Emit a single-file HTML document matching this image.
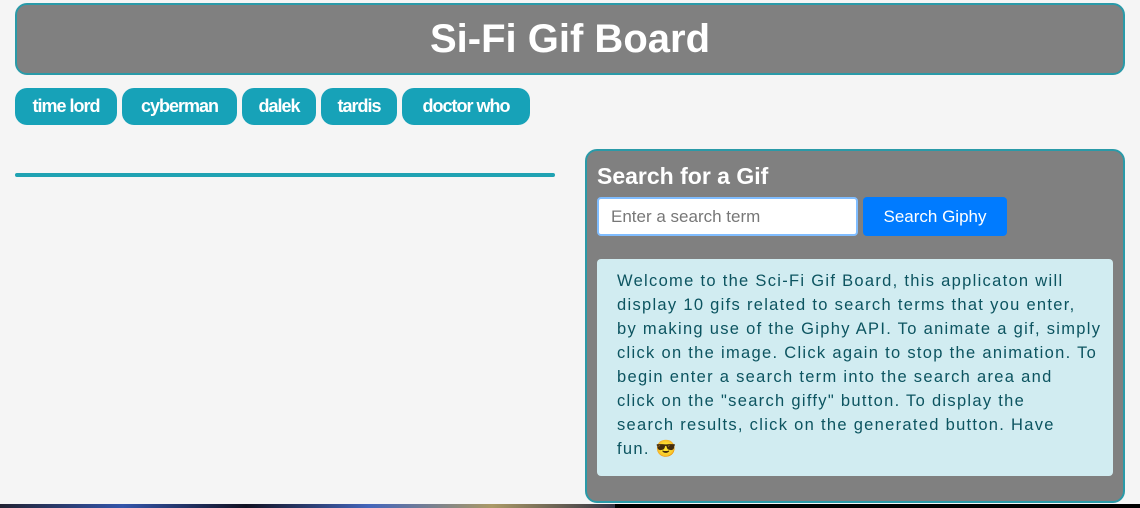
<!DOCTYPE html><html><head><style>
body{margin:0;background:#f5f5f5;width:1140px;height:508px;overflow:hidden;position:relative;font-family:"Liberation Sans",sans-serif}
.hd{position:absolute;left:15px;top:3px;width:1106px;height:68px;background:#808080;border:2px solid #2a9aa8;border-radius:12px;color:#fff;font-weight:bold;font-size:40px;text-align:center;line-height:68px}
.b{position:absolute;top:88px;height:37px;background:#17a2b8;border-radius:12px;color:#fff;font-size:18px;font-weight:bold;line-height:37px;text-align:center;letter-spacing:-1px}
.ln{position:absolute;left:15px;top:173px;width:540px;height:4px;background:#1fa2b2;border-radius:2px}
.p{position:absolute;left:585px;top:149px;width:536px;height:350px;background:#808080;border:2px solid #2a9aa8;border-radius:12px}
.p h3{position:absolute;left:10px;top:12px;margin:0;color:#fff;font-size:23px}
.in{position:absolute;left:10px;top:46px;width:261px;height:39px;background:#fff;border:2px solid #80bdff;border-radius:4px;box-sizing:border-box;color:#777;font-size:17px;line-height:35px;padding-left:12px}
.sb{position:absolute;left:276px;top:46px;width:144px;height:39px;background:#007bff;border-radius:4px;color:#fff;font-size:17px;line-height:39px;text-align:center}
.info{position:absolute;left:10px;top:108px;width:476px;height:197px;padding:10px 20px;background:#d1ecf1;color:#0c5460;font-size:16.5px;line-height:24px;border-radius:4px;white-space:nowrap;letter-spacing:1.3px}
.bot{position:absolute;left:0;top:504px;width:1140px;height:4px;background:#000}
.bot2{position:absolute;left:0;top:504px;width:615px;height:4px;background:linear-gradient(90deg,#223,#35a,#112,#46b,#a96,#334)}
</style></head><body>
<div class="hd">Si-Fi Gif Board</div>
<div class="b" style="left:15px;width:102px">time lord</div>
<div class="b" style="left:122px;width:115px">cyberman</div>
<div class="b" style="left:242px;width:74px">dalek</div>
<div class="b" style="left:321px;width:76px">tardis</div>
<div class="b" style="left:402px;width:128px">doctor who</div>
<div class="ln"></div>
<div class="p"><h3>Search for a Gif</h3>
<div class="in">Enter a search term</div>
<div class="sb">Search Giphy</div>
<div class="info">Welcome to the Sci-Fi Gif Board, this applicaton will<br>display 10 gifs related to search terms that you enter,<br>by making use of the Giphy API. To animate a gif, simply<br>click on the image. Click again to stop the animation. To<br>begin enter a search term into the search area and<br>click on the "search giffy" button. To display the<br>search results, click on the generated button. Have<br>fun. 😎</div>
</div>
<div class="bot"></div><div class="bot2"></div>
</body></html>
